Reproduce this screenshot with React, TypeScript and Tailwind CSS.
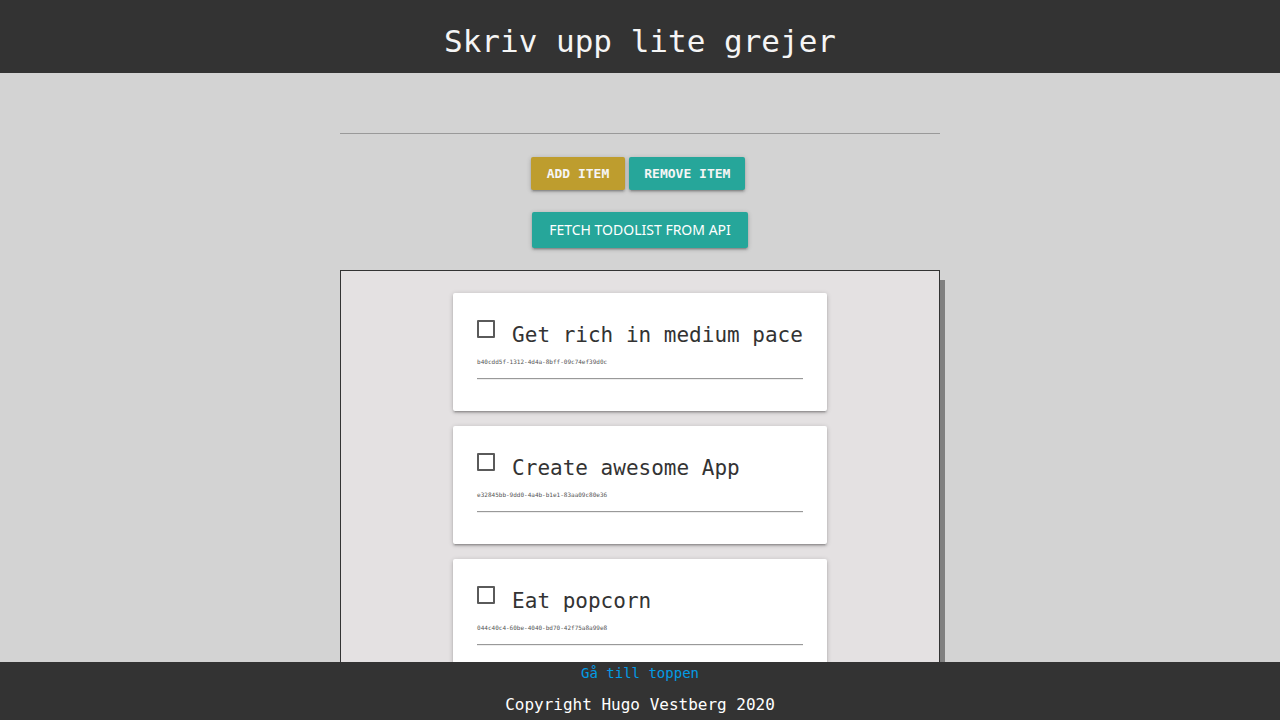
import React from "react";

type Todo = { id: string; title: string };

const initialTodos: Todo[] = [
  { id: "b40cdd5f-1312-4d4a-8bff-09c74ef39d0c", title: "Get rich in medium pace" },
  { id: "e32845bb-9dd0-4a4b-b1e1-83aa09c80e36", title: "Create awesome App" },
  { id: "044c40c4-60be-4040-bd70-42f75a8a99e8", title: "Eat popcorn" },
];

const raised =
  "rounded-[2px] shadow-[0_2px_2px_0_rgba(0,0,0,0.14),0_3px_1px_-2px_rgba(0,0,0,0.12),0_1px_5px_0_rgba(0,0,0,0.2)]";

function TodoCard({ todo }: { todo: Todo }) {
  return (
    <li className={`bg-white px-6 pt-6 pb-[31px] ${raised}`}>
      <div className="flex items-start">
        <input
          id={todo.id}
          type="checkbox"
          className="mt-[3px] mr-[17px] size-[18px] shrink-0 appearance-none rounded-[1px] border-2 border-[#5a5a5a] bg-white checked:bg-[#26a69a]"
        />
        <label htmlFor={todo.id} className="pt-1 text-[21px] leading-7">
          {todo.title}
        </label>
      </div>
      <p className="mt-2 text-[6px] leading-[10px] text-[#555]">{todo.id}</p>
      <hr className="mt-[11px] border-y border-t-[#999] border-b-[#eee]" />
    </li>
  );
}

export default function App() {
  return (
    <div
      id="top"
      className="min-h-screen bg-[#d3d3d3] pb-[58px] font-['DejaVu_Sans_Mono',monospace] text-[#333]"
    >
      <header className="bg-[#333] pt-[19px] pb-[10px] text-center text-[#f5f5f5]">
        <h1 className="text-[31px] leading-[44px]">Skriv upp lite grejer</h1>
      </header>
      <main className="mx-auto flex max-w-[600px] flex-col items-center pt-[60px] pb-5">
        <hr className="w-full border-[#999]" />
        <div className="mt-[23px] flex gap-1 pr-1">
          <button
            type="button"
            className={`h-[33px] bg-[#be9d2e] px-4 text-[13px] font-bold text-[#f5f5f5] uppercase ${raised}`}
          >
            Add item
          </button>
          <button
            type="button"
            className={`h-[33px] bg-[#26a69a] px-[15px] text-[13px] font-bold text-[#f5f5f5] uppercase ${raised}`}
          >
            Remove item
          </button>
        </div>
        <button
          type="button"
          className={`mt-[22px] h-9 bg-[#26a69a] px-[17px] pb-[2px] font-['Noto_Sans',sans-serif] text-[14px] text-white uppercase ${raised}`}
        >
          Fetch todolist from API
        </button>
        <section className="mt-[22px] flex w-full justify-center border border-[#333] bg-[#e4e1e2] py-[22px] shadow-[5px_10px_#808080]">
          <ul className="flex flex-col gap-[15px]">
            {initialTodos.map((todo) => (
              <TodoCard key={todo.id} todo={todo} />
            ))}
          </ul>
        </section>
      </main>
      <footer className="fixed inset-x-0 bottom-0 flex flex-col items-center bg-[#333] pb-[3px] text-white">
        <a href="#top" className="text-[14px] leading-[22px] text-[#039be5]">
          Gå till toppen
        </a>
        <p className="mt-[9px] text-base leading-6">Copyright Hugo Vestberg 2020</p>
      </footer>
    </div>
  );
}
